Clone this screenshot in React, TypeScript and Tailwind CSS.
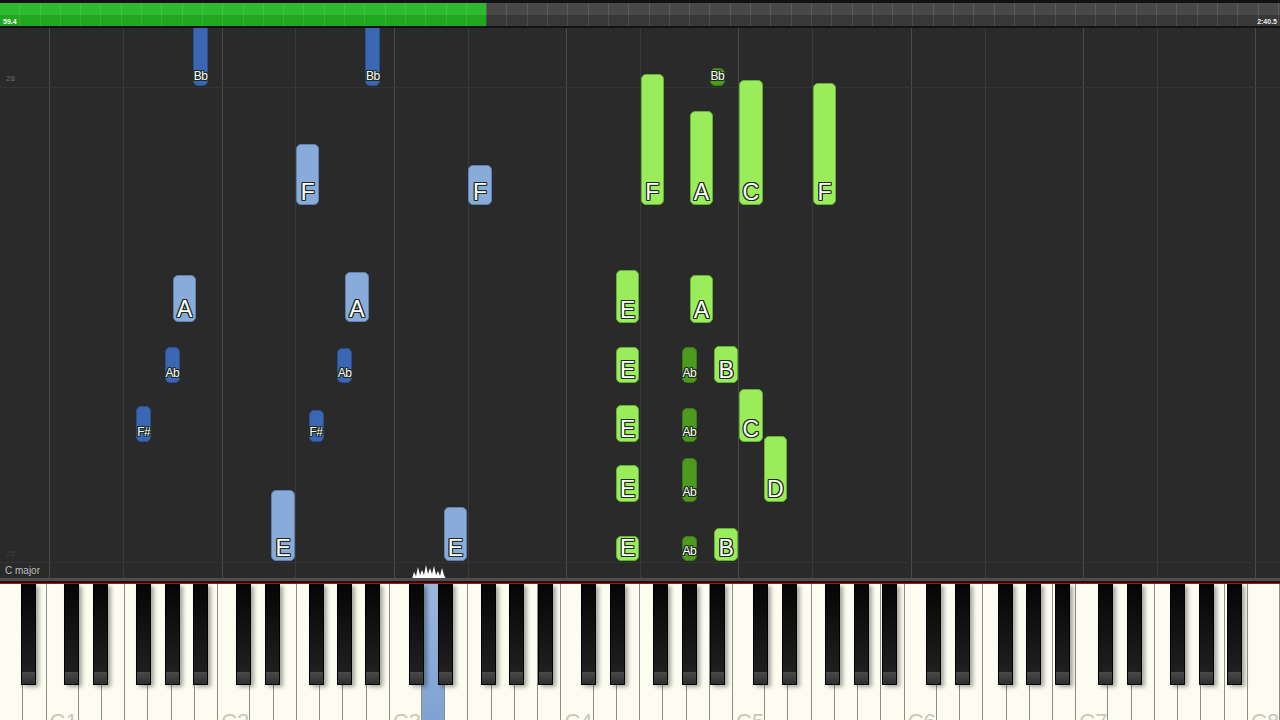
import React from 'react'

const KW = 1280 / 52
const LETTERS = ['C', 'D', 'E', 'F', 'G', 'A', 'B']
const SHARP_OFFSET: Record<string, number> = { C: -2.3, D: 2, F: -4, G: 0, A: 3.6 }
const ROLL_TOP = 28

type Note = { k: string; label: string; top: number; bottom: number; hand: 'l' | 'r' }

// white key index from A0 = 0
const whiteIndex = (letter: string, oct: number) => oct * 7 + LETTERS.indexOf(letter) - 5

function keyBox(k: string) {
  const m = k.match(/^([A-G])(#?)(\d)$/)!
  const w = whiteIndex(m[1], Number(m[3]))
  if (!m[2]) return { left: w * KW + 0.5, width: KW - 1, black: false }
  const center = (w + 1) * KW + SHARP_OFFSET[m[1]]
  return { left: center - 7.5, width: 15, black: true }
}

const notes: Note[] = [
  { k: 'A#1', label: 'Bb', top: 20, bottom: 86, hand: 'l' },
  { k: 'A#2', label: 'Bb', top: 20, bottom: 86, hand: 'l' },
  { k: 'F2', label: 'F', top: 144, bottom: 205, hand: 'l' },
  { k: 'F3', label: 'F', top: 165, bottom: 205, hand: 'l' },
  { k: 'A1', label: 'A', top: 275, bottom: 322, hand: 'l' },
  { k: 'A2', label: 'A', top: 272, bottom: 322, hand: 'l' },
  { k: 'G#1', label: 'Ab', top: 347, bottom: 383, hand: 'l' },
  { k: 'G#2', label: 'Ab', top: 348, bottom: 383, hand: 'l' },
  { k: 'F#1', label: 'F#', top: 406, bottom: 442, hand: 'l' },
  { k: 'F#2', label: 'F#', top: 410, bottom: 442, hand: 'l' },
  { k: 'E2', label: 'E', top: 490, bottom: 561, hand: 'l' },
  { k: 'E3', label: 'E', top: 507, bottom: 561, hand: 'l' },

  { k: 'F4', label: 'F', top: 74, bottom: 205, hand: 'r' },
  { k: 'A4', label: 'A', top: 111, bottom: 205, hand: 'r' },
  { k: 'C5', label: 'C', top: 80, bottom: 205, hand: 'r' },
  { k: 'F5', label: 'F', top: 83, bottom: 205, hand: 'r' },
  { k: 'A#4', label: 'Bb', top: 68, bottom: 86, hand: 'r' },
  { k: 'E4', label: 'E', top: 270, bottom: 323, hand: 'r' },
  { k: 'A4', label: 'A', top: 275, bottom: 323, hand: 'r' },
  { k: 'E4', label: 'E', top: 347, bottom: 383, hand: 'r' },
  { k: 'G#4', label: 'Ab', top: 347, bottom: 383, hand: 'r' },
  { k: 'B4', label: 'B', top: 346, bottom: 383, hand: 'r' },
  { k: 'E4', label: 'E', top: 405, bottom: 442, hand: 'r' },
  { k: 'G#4', label: 'Ab', top: 408, bottom: 442, hand: 'r' },
  { k: 'C5', label: 'C', top: 389, bottom: 442, hand: 'r' },
  { k: 'E4', label: 'E', top: 465, bottom: 502, hand: 'r' },
  { k: 'G#4', label: 'Ab', top: 458, bottom: 502, hand: 'r' },
  { k: 'D5', label: 'D', top: 436, bottom: 502, hand: 'r' },
  { k: 'E4', label: 'E', top: 536, bottom: 561, hand: 'r' },
  { k: 'G#4', label: 'Ab', top: 536, bottom: 561, hand: 'r' },
  { k: 'B4', label: 'B', top: 528, bottom: 561, hand: 'r' },
]

const outline =
  '[text-shadow:-1px_-1px_0_#1e2a1a,1px_-1px_0_#1e2a1a,-1px_1px_0_#1e2a1a,1px_1px_0_#1e2a1a,0_1px_0_#1e2a1a,0_-1px_0_#1e2a1a,1px_0_0_#1e2a1a,-1px_0_0_#1e2a1a]'

function NoteBlock({ n }: { n: Note }) {
  const box = keyBox(n.k)
  const color = n.hand === 'l'
    ? box.black
      ? 'bg-[#3b66b3] border-[#2c4f8e]'
      : 'bg-[#88abd9] border-[#5f80b3]'
    : box.black
      ? 'bg-[#4c9b1f] border-[#3a7a16]'
      : 'bg-[#9bec5b] border-[#62b334]'
  return (
    <div
      className={`absolute flex flex-col items-center justify-end rounded-[5px] border ${color}`}
      style={{ left: box.left, width: box.width, top: n.top - ROLL_TOP, height: n.bottom - n.top }}
    >
      {box.black ? (
        <span className={`pb-[3px] text-[12px] leading-none tracking-[-0.5px] text-white ${outline}`}>
          {n.label}
        </span>
      ) : (
        <span className={`pb-0 text-[23px] leading-none text-white ${outline}`}>{n.label}</span>
      )}
    </div>
  )
}

function TopBar() {
  return (
    <div className="h-[28px] shrink-0 bg-[#111] pt-[3px]">
      <div className="relative flex h-[24px] border-b border-[#151515]">
        <div className="flex h-full w-[486px] flex-col">
          <div className="h-1/2 bg-[#2eb92e]" />
          <div className="h-1/2 bg-[#1fa71f]" />
        </div>
        <div className="flex h-full flex-1 flex-col">
          <div className="h-1/2 bg-[#484848]" />
          <div className="h-1/2 bg-[#383838]" />
        </div>
        <div className="pointer-events-none absolute inset-0 bg-[repeating-linear-gradient(90deg,transparent_0_19.3px,rgba(255,255,255,0.1)_19.3px_20.3px)]" />
        <span className="absolute left-[3px] top-[15px] text-[7px] font-bold leading-none text-white">59.4</span>
        <span className="absolute right-[3px] top-[15px] text-[7px] font-bold leading-none text-[#eee]">2:40.5</span>
      </div>
    </div>
  )
}

function Roll() {
  const lines: { x: number; c: boolean }[] = []
  for (let o = 1; o <= 8; o++) {
    lines.push({ x: whiteIndex('C', o) * KW, c: true })
    if (o < 8) lines.push({ x: whiteIndex('F', o) * KW, c: false })
  }
  return (
    <div className="relative h-[550px] shrink-0 overflow-hidden bg-[#2a2a2a]">
      {lines.map((l) => (
        <div
          key={l.x}
          className={`absolute top-0 h-full w-px ${l.c ? 'bg-[#4a4a4a]' : 'bg-[#3a3a3a]'}`}
          style={{ left: Math.round(l.x) }}
        />
      ))}
      <div className="absolute left-0 right-0 top-[59px] h-px bg-[#343434]" />
      <div className="absolute left-0 right-0 top-[534px] h-px bg-[#343434]" />
      <span className="absolute left-[6px] top-[47px] text-[8px] leading-none text-[#6a6a6a]">28</span>
      <span className="absolute left-[6px] top-[522px] text-[8px] leading-none text-[#3f3f3f]">25</span>
      <span className="absolute left-[5px] top-[538px] text-[10px] leading-none text-[#bdbdbd]">C major</span>

      {notes.map((n, i) => (
        <NoteBlock key={i} n={n} />
      ))}

      {/* hit splash */}
      <svg className="absolute left-[408px] top-[534px]" width="42" height="18" viewBox="0 0 42 18">
        <defs>
          <radialGradient id="g" cx="50%" cy="90%" r="60%">
            <stop offset="0%" stopColor="#ffffff" stopOpacity="1" />
            <stop offset="60%" stopColor="#cfe2ff" stopOpacity="0.6" />
            <stop offset="100%" stopColor="#9cc4ff" stopOpacity="0" />
          </radialGradient>
        </defs>
        <ellipse cx="21" cy="16" rx="21" ry="9" fill="url(#g)" />
        <path
          d="M4 17 L6 10 L8 14 L10 5 L12 13 L14 8 L16 13 L18 3 L20 12 L22 6 L24 12 L26 4 L28 13 L30 9 L32 14 L34 6 L36 13 L38 17 Z"
          fill="#ffffff"
        />
      </svg>
    </div>
  )
}

function Keyboard() {
  const whites = Array.from({ length: 52 }, (_, i) => {
    const letter = LETTERS[(i + 5) % 7]
    const oct = Math.floor((i + 5) / 7)
    return { i, letter, oct }
  })
  const blacks: string[] = ['A#0']
  for (let o = 1; o <= 7; o++) ['C', 'D', 'F', 'G', 'A'].forEach((l) => blacks.push(`${l}#${o}`))

  return (
    <div className="relative flex flex-1 overflow-hidden bg-[#fcfcf0]">
      {whites.map((w) => (
        <div
          key={w.i}
          className={`flex-1 border-r border-[#8f8f86] pt-[127px] ${w.i === 17 ? 'bg-[linear-gradient(180deg,#9bb8e0,#7fa2d2)]' : 'bg-[#fcfcf0]'}`}
        >
          {w.letter === 'C' && (
            <div className="pl-[3px] text-[22px] leading-none text-[#c8c8ba]">C{w.oct}</div>
          )}
        </div>
      ))}
      {blacks.map((b) => {
        const box = keyBox(b)
        return (
          <div
            key={b}
            className="absolute top-0 flex h-[101px] flex-col justify-end rounded-b-[1px] border border-t-0 border-black bg-[linear-gradient(180deg,#050505,#1a1a1a_70%,#222)] shadow-[3px_2px_4px_rgba(0,0,0,0.35)]"
            style={{ left: box.left, width: box.width }}
          >
            <div className="h-[12px] border-t border-[#4a4a4a] bg-[linear-gradient(180deg,#474747,#2e2e2e)]" />
          </div>
        )
      })}
    </div>
  )
}

export default function App() {
  return (
    <div className="flex h-[720px] w-[1280px] flex-col overflow-hidden bg-[#2a2a2a] font-['Liberation_Sans',Arial,sans-serif]">
      <TopBar />
      <Roll />
      <div className="h-[3px] shrink-0 bg-[#4e4e4e]" />
      <div className="h-[2px] shrink-0 bg-[#2a0c0c]" />
      <div className="h-[1px] shrink-0 bg-[#a31414]" />
      <Keyboard />
    </div>
  )
}
